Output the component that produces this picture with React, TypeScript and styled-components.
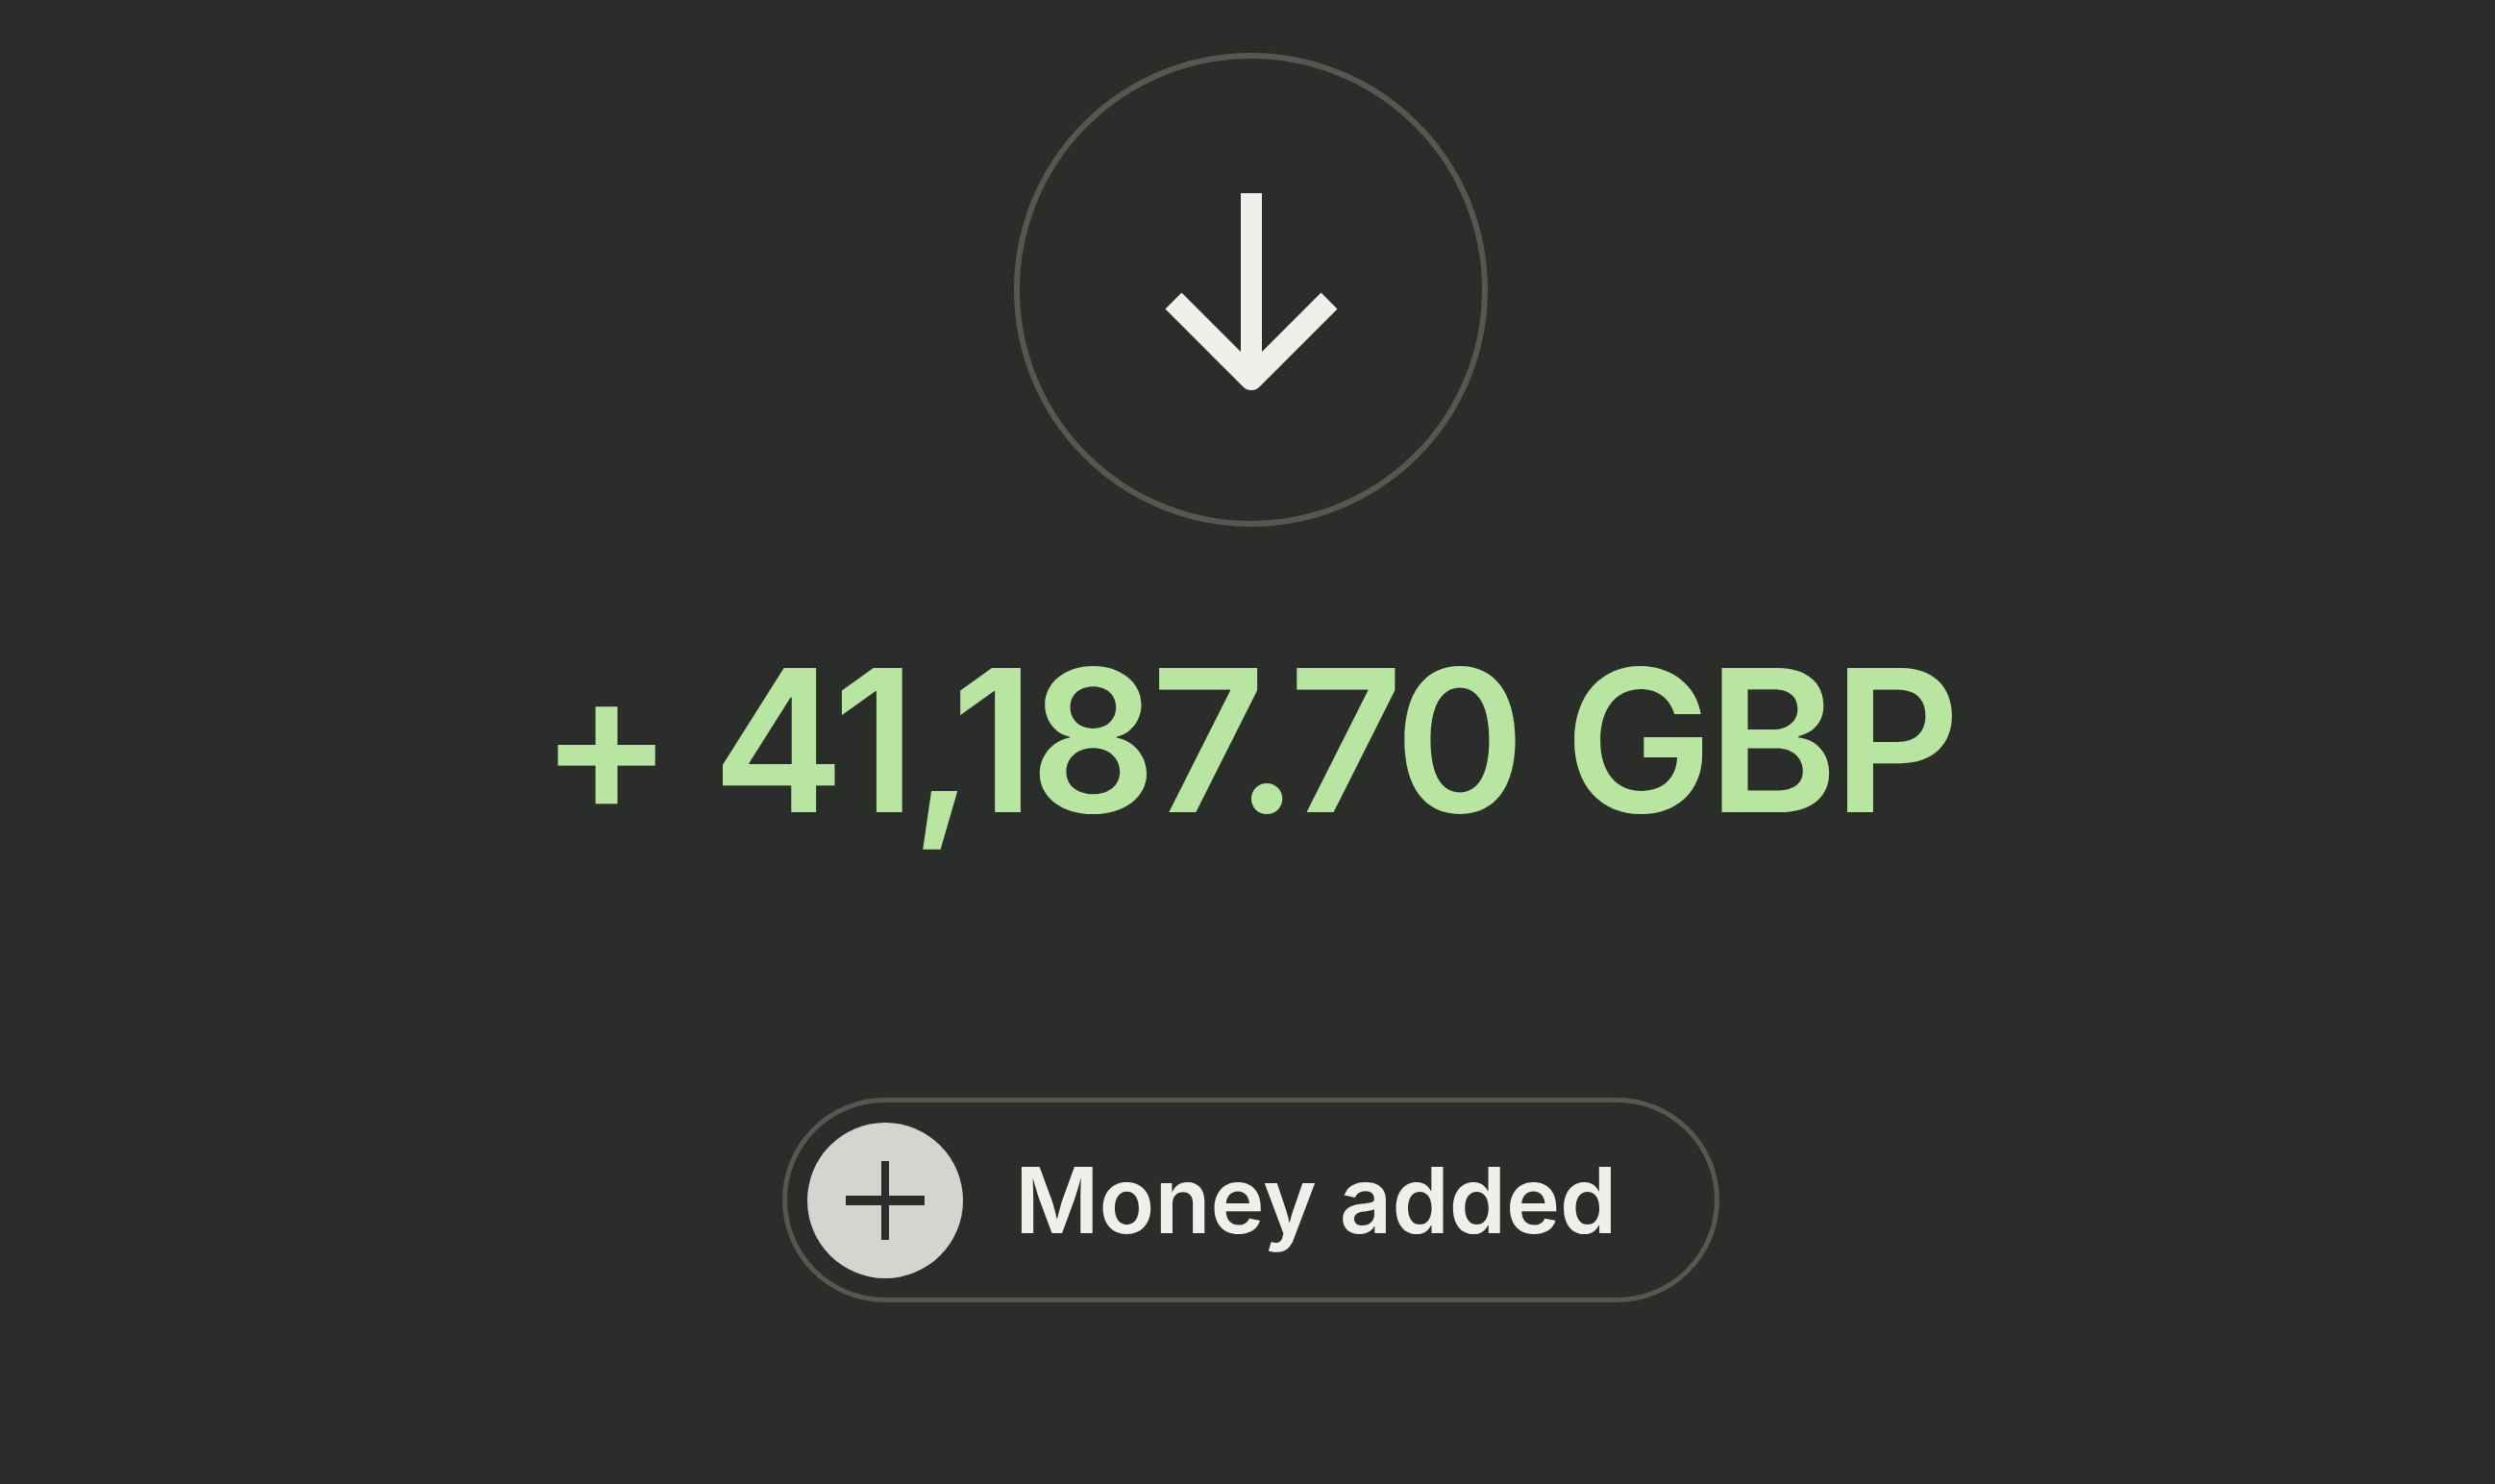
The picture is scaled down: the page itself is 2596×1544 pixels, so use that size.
import * as React from 'react';
import { createGlobalStyle, styled } from 'styled-components';

const GlobalStyle = createGlobalStyle`
  html, body {
    margin: 0;
    padding: 0;
    background: #2b2d2a;
  }
`;

const Page = styled.main`
  display: flex;
  flex-direction: column;
  align-items: center;
  width: 2596px;
  height: 1544px;
  padding: 55px 0 0 7px;
  box-sizing: border-box;
  overflow: hidden;
  background: #2b2d2a;
  font-family: Inter, "Liberation Sans", sans-serif;
`;

const ArrowCircle = styled.div`
  display: flex;
  align-items: center;
  justify-content: center;
  width: 493px;
  height: 493px;
  box-sizing: border-box;
  border: 6px solid #545851;
  border-radius: 50%;
`;

const Amount = styled.h1`
  margin: 97px 7px 0 0;
  color: #b8e6a0;
  font-size: 206px;
  font-weight: 600;
  line-height: 250px;
  letter-spacing: -5.5px;
  white-space: nowrap;
`;

const Pill = styled.div`
  display: flex;
  align-items: center;
  gap: 54px;
  width: 975px;
  height: 213px;
  margin-top: 247px;
  padding-left: 21px;
  box-sizing: border-box;
  border: 5px solid #545851;
  border-radius: 107px;
`;

const PlusBadge = styled.div`
  display: flex;
  align-items: center;
  justify-content: center;
  flex: none;
  width: 162px;
  height: 162px;
  border-radius: 50%;
  background: #d2d5d0;
`;

const PillLabel = styled.span`
  color: #eef0ec;
  font-size: 95px;
  font-weight: 600;
  line-height: 1;
  white-space: nowrap;
`;

export default function App() {
  return (
    <Page>
      <GlobalStyle />
      <ArrowCircle>
        <svg width="200" height="226" viewBox="0 0 200 226" fill="none">
          <path d="M100 12V205" stroke="#eef0ec" strokeWidth="22" />
          <path d="M19 124L100 205L181 124" stroke="#eef0ec" strokeWidth="24" strokeLinejoin="round" />
        </svg>
      </ArrowCircle>
      <Amount>+ 41,187.70 GBP</Amount>
      <Pill>
        <PlusBadge>
          <svg width="82" height="82" viewBox="0 0 82 82" fill="none">
            <path d="M41 0V82" stroke="#2b2d2a" strokeWidth="8" />
            <path d="M0 41H82" stroke="#2b2d2a" strokeWidth="10" />
          </svg>
        </PlusBadge>
        <PillLabel>Money added</PillLabel>
      </Pill>
    </Page>
  );
}
